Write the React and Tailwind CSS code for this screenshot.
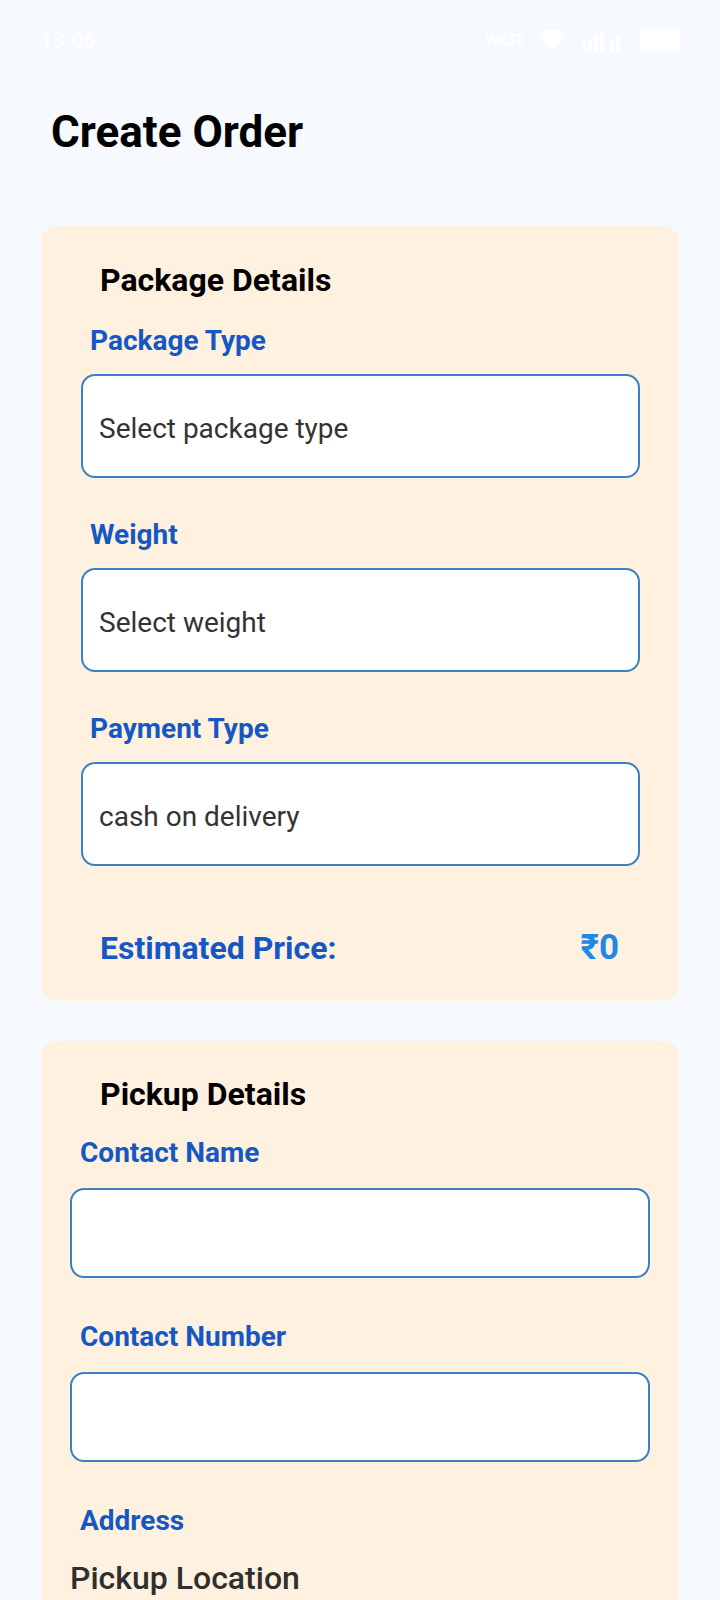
export default function App() {
  return (
    <div
      className="min-h-screen bg-[#f6f9fe] text-black"
      style={{ fontFamily: "Roboto, 'Noto Sans', sans-serif" }}
    >
      <StatusBar />

      <h1 className="pl-[51px] pt-[22px] text-[44px] font-bold leading-[52px]">Create Order</h1>

      <div className="mt-[68px] flex flex-col gap-[40px] px-[41px]">
        {/* Package card */}
        <section className="rounded-[16px] bg-[#fff1df] pt-[36px] pb-[35px]">
          <h2 className="pl-[59px] text-[32px] font-bold leading-[36px]">Package Details</h2>
          <div className="mt-[27px] flex flex-col gap-[41px]">
            <SelectField label="Package Type" value="Select package type" />
            <SelectField label="Weight" value="Select weight" />
            <SelectField label="Payment Type" value="cash on delivery" />
          </div>
          <div className="mt-[64px] flex items-center justify-between pl-[59px] pr-[60px]">
            <span className="text-[32px] font-bold leading-[36px] text-[#1558c4]">Estimated Price:</span>
            <span className="text-[35px] font-bold leading-[36px] text-[#1e88e5]">₹0</span>
          </div>
        </section>

        {/* Pickup card */}
        <section className="rounded-t-[16px] bg-[#fff1df] pt-[35px] pb-[40px]">
          <h2 className="pl-[59px] text-[32px] font-bold leading-[36px]">Pickup Details</h2>
          <div className="mt-[25px] flex flex-col gap-[43px] px-[29px]">
            <TextField label="Contact Name" />
            <TextField label="Contact Number" />
            <div>
              <div className="pl-[10px] text-[28px] font-bold leading-[32px] text-[#1558c4]">Address</div>
              <div className="mt-[23px] text-[32px] font-medium leading-[36px] text-[#2f2f2f]">Pickup Location</div>
            </div>
          </div>
        </section>
      </div>
    </div>
  );
}

function StatusBar() {
  return (
    <div className="flex h-[84px] items-center justify-between px-[40px] pb-[4px] text-white">
      <span className="text-[22px] font-medium">13:06</span>
      <div className="flex items-center gap-[14px]">
        <span className="text-[14px] font-bold leading-[14px]">VoLTE</span>
        <svg width="30" height="24" viewBox="0 0 30 24" fill="white">
          <path d="M15 22 1 7c8-7 20-7 28 0Z" />
        </svg>
        <svg width="44" height="22" viewBox="0 0 44 22" fill="white">
          <rect x="0" y="14" width="4" height="8" />
          <rect x="6" y="10" width="4" height="12" />
          <rect x="12" y="6" width="4" height="16" />
          <rect x="18" y="2" width="4" height="20" />
          <rect x="28" y="10" width="4" height="12" />
          <rect x="34" y="6" width="4" height="16" />
        </svg>
        <div className="h-[22px] w-[40px] rounded-[4px] bg-white" />
      </div>
    </div>
  );
}

function SelectField({ label, value }) {
  return (
    <div>
      <div className="pl-[49px] text-[28px] font-bold leading-[32px] text-[#1558c4]">{label}</div>
      <div className="mt-[17px] ml-[40px] mr-[39px] flex h-[104px] items-center rounded-[14px] border-2 border-[#3a80c3] bg-white px-[16px] pt-[6px]">
        <span className="text-[28px] leading-[32px] text-[#333333]">{value}</span>
      </div>
    </div>
  );
}

function TextField({ label }) {
  return (
    <div>
      <div className="pl-[10px] text-[28px] font-bold leading-[32px] text-[#1558c4]">{label}</div>
      <div className="mt-[19px] h-[90px] rounded-[14px] border-2 border-[#3a80c3] bg-white" />
    </div>
  );
}
